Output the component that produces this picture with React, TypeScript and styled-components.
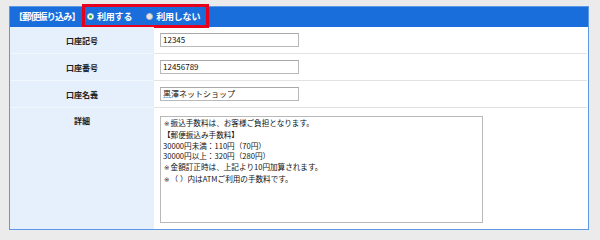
import React from "react";
import styled, { createGlobalStyle } from "styled-components";

const Global = createGlobalStyle`
  html, body { margin: 0; padding: 0; }
  body {
    background: #ebebeb;
    font-family: "Noto Sans CJK JP", "Noto Sans", sans-serif;
    width: 600px;
    height: 240px;
    overflow: hidden;
  }
`;

const Page = styled.div`
  padding: 6px 0 0 9px;
`;

const Panel = styled.div`
  width: 578px;
  border: 1px solid #5e98e4;
  background: #ffffff;
`;

const Header = styled.div`
  display: flex;
  align-items: flex-start;
  height: 20px;
  background: #1a6edb;
  padding-left: 4px;
`;

const Title = styled.div`
  color: #ffffff;
  font-weight: bold;
  font-size: 9px;
  letter-spacing: -0.8px;
  line-height: 20px;
  width: 68px;
`;

const RadioGroup = styled.div`
  display: flex;
  align-items: center;
  gap: 14px;
  box-sizing: border-box;
  height: 24px;
  width: 127px;
  margin-top: -3px;
  border: 3px solid #e6001b;
  padding-left: 2px;
`;

const RadioItem = styled.label`
  display: flex;
  align-items: center;
  gap: 3px;
  color: #ffffff;
  font-weight: bold;
  font-size: 9px;
  letter-spacing: -0.2px;
`;

const Dot = styled.span<{ $on: boolean }>`
  display: inline-block;
  box-sizing: border-box;
  width: 7px;
  height: 7px;
  border-radius: 50%;
  background: ${(p) => (p.$on ? "#ffffff" : "#e6e6e6")};
  border: 1px solid ${(p) => (p.$on ? "#c8d8c8" : "#bdbdbd")};
  position: relative;
  &::after {
    content: "";
    display: ${(p) => (p.$on ? "block" : "none")};
    position: absolute;
    left: 1px;
    top: 1px;
    width: 3px;
    height: 3px;
    border-radius: 50%;
    background: #2aa52a;
  }
`;

const Row = styled.div<{ $h: number }>`
  display: grid;
  grid-template-columns: 144px 1fr;
  height: ${(p) => p.$h}px;
`;

const Label = styled.div<{ $top?: boolean }>`
  background: #e5f0fc;
  border-bottom: 1px solid ${(p) => (p.$top ? "transparent" : "#f2f7fd")};
  display: flex;
  justify-content: center;
  align-items: ${(p) => (p.$top ? "flex-start" : "center")};
  padding-top: ${(p) => (p.$top ? "7px" : "0")};
  font-weight: bold;
  font-size: 8px;
  color: #222;
`;

const Value = styled.div<{ $top?: boolean; $last?: boolean }>`
  border-bottom: 1px solid ${(p) => (p.$last ? "transparent" : "#e2e2e2")};
  margin-right: 1px;
  display: flex;
  align-items: ${(p) => (p.$top ? "flex-start" : "center")};
  padding-left: 6px;
  padding-top: ${(p) => (p.$top ? "8px" : "0")};
`;

const Input = styled.div`
  box-sizing: border-box;
  width: 139px;
  height: 14px;
  border: 1px solid #b9b9b9;
  border-top-color: #a8a8a8;
  background: #fff;
  font-size: 8px;
  line-height: 12px;
  padding-left: 2px;
  color: #111;
`;

const TextArea = styled.div`
  box-sizing: border-box;
  width: 323px;
  height: 107px;
  border: 1px solid #b9b9b9;
  background: #fff;
  font-size: 7.6px;
  line-height: 10.8px;
  padding: 1px 0 0 2px;
  color: #111;
  white-space: pre;
`;

const Mark = styled.span`
  display: inline-block;
  width: 7.6px;
  font-family: "DejaVu Sans", "Noto Sans CJK SC", sans-serif;
  font-size: 6.5px;
  color: #111;
  text-align: center;
`;

const lines: { mark: boolean; text: string }[] = [
  { mark: true, text: "振込手数料は、お客様ご負担となります。" },
  { mark: false, text: "【郵便振込み手数料】" },
  { mark: false, text: "30000円未満：110円（70円）" },
  { mark: false, text: "30000円以上：320円（280円）" },
  { mark: true, text: "金額訂正時は、上記より10円加算されます。" },
  { mark: true, text: "（ ）内はATMご利用の手数料です。" },
];

export default function App() {
  return (
    <>
      <Global />
      <Page>
        <Panel>
          <Header>
            <Title>【郵便振り込み】</Title>
            <RadioGroup>
              <RadioItem>
                <Dot $on={true} />
                利用する
              </RadioItem>
              <RadioItem>
                <Dot $on={false} />
                利用しない
              </RadioItem>
            </RadioGroup>
          </Header>
          <Row $h={27}>
            <Label>口座記号</Label>
            <Value>
              <Input>12345</Input>
            </Value>
          </Row>
          <Row $h={27}>
            <Label>口座番号</Label>
            <Value>
              <Input>12456789</Input>
            </Value>
          </Row>
          <Row $h={27}>
            <Label>口座名義</Label>
            <Value>
              <Input>黒澤ネットショップ</Input>
            </Value>
          </Row>
          <Row $h={121}>
            <Label $top>詳細</Label>
            <Value $top $last>
              <TextArea>
                {lines.map((l, i) => (
                  <div key={i}>
                    {l.mark && <Mark>{"\u203B"}</Mark>}
                    {l.text}
                  </div>
                ))}
              </TextArea>
            </Value>
          </Row>
        </Panel>
      </Page>
    </>
  );
}
